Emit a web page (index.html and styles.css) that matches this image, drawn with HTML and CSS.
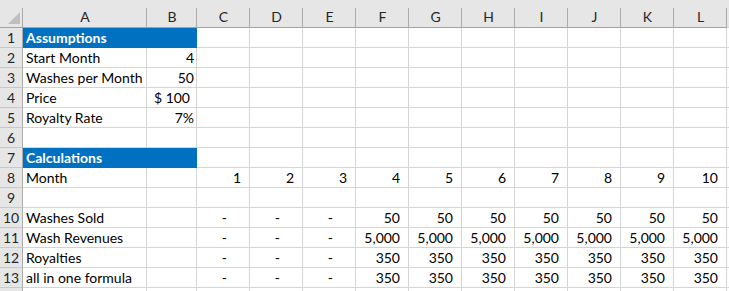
FILE: index.html
```html
<!DOCTYPE html>
<html>
<head>
<meta charset="utf-8">
<link rel="stylesheet" href="styles.css">
</head>
<body>
<div class="sheet">
  <div class="ch corner"><span class="tri"></span></div>
  <div class="ch">A</div><div class="ch">B</div><div class="ch">C</div><div class="ch">D</div><div class="ch">E</div><div class="ch">F</div><div class="ch">G</div><div class="ch">H</div><div class="ch">I</div><div class="ch">J</div><div class="ch">K</div><div class="ch">L</div><div class="ch x"></div>

  <div class="rh">1</div><div class="c title">Assumptions</div>
  <div class="c"></div><div class="c"></div><div class="c"></div><div class="c"></div><div class="c"></div><div class="c"></div><div class="c"></div><div class="c"></div><div class="c"></div><div class="c"></div><div class="x"></div>

  <div class="rh">2</div><div class="c">Start Month</div><div class="c num">4</div>
  <div class="c"></div><div class="c"></div><div class="c"></div><div class="c"></div><div class="c"></div><div class="c"></div><div class="c"></div><div class="c"></div><div class="c"></div><div class="c"></div><div class="x"></div>

  <div class="rh">3</div><div class="c">Washes per Month</div><div class="c num">50</div>
  <div class="c"></div><div class="c"></div><div class="c"></div><div class="c"></div><div class="c"></div><div class="c"></div><div class="c"></div><div class="c"></div><div class="c"></div><div class="c"></div><div class="x"></div>

  <div class="rh">4</div><div class="c">Price</div><div class="c acct"><span>$</span><span>100</span></div>
  <div class="c"></div><div class="c"></div><div class="c"></div><div class="c"></div><div class="c"></div><div class="c"></div><div class="c"></div><div class="c"></div><div class="c"></div><div class="c"></div><div class="x"></div>

  <div class="rh">5</div><div class="c">Royalty Rate</div><div class="c num">7%</div>
  <div class="c"></div><div class="c"></div><div class="c"></div><div class="c"></div><div class="c"></div><div class="c"></div><div class="c"></div><div class="c"></div><div class="c"></div><div class="c"></div><div class="x"></div>

  <div class="rh">6</div><div class="c"></div><div class="c"></div>
  <div class="c"></div><div class="c"></div><div class="c"></div><div class="c"></div><div class="c"></div><div class="c"></div><div class="c"></div><div class="c"></div><div class="c"></div><div class="c"></div><div class="x"></div>

  <div class="rh">7</div><div class="c title">Calculations</div>
  <div class="c"></div><div class="c"></div><div class="c"></div><div class="c"></div><div class="c"></div><div class="c"></div><div class="c"></div><div class="c"></div><div class="c"></div><div class="c"></div><div class="x"></div>

  <div class="rh">8</div><div class="c">Month</div><div class="c"></div>
  <div class="c num m">1</div><div class="c num m">2</div><div class="c num m">3</div><div class="c num m">4</div><div class="c num m">5</div><div class="c num m">6</div><div class="c num m">7</div><div class="c num m">8</div><div class="c num m">9</div><div class="c num m">10</div><div class="x"></div>

  <div class="rh">9</div><div class="c"></div><div class="c"></div>
  <div class="c"></div><div class="c"></div><div class="c"></div><div class="c"></div><div class="c"></div><div class="c"></div><div class="c"></div><div class="c"></div><div class="c"></div><div class="c"></div><div class="x"></div>

  <div class="rh">10</div><div class="c">Washes Sold</div><div class="c"></div>
  <div class="c num dash">-</div><div class="c num dash">-</div><div class="c num dash">-</div><div class="c num m">50</div><div class="c num m">50</div><div class="c num m">50</div><div class="c num m">50</div><div class="c num m">50</div><div class="c num m">50</div><div class="c num m">50</div><div class="x"></div>

  <div class="rh">11</div><div class="c">Wash Revenues</div><div class="c"></div>
  <div class="c num dash">-</div><div class="c num dash">-</div><div class="c num dash">-</div><div class="c num m">5,000</div><div class="c num m">5,000</div><div class="c num m">5,000</div><div class="c num m">5,000</div><div class="c num m">5,000</div><div class="c num m">5,000</div><div class="c num m">5,000</div><div class="x"></div>

  <div class="rh">12</div><div class="c">Royalties</div><div class="c"></div>
  <div class="c num dash">-</div><div class="c num dash">-</div><div class="c num dash">-</div><div class="c num m">350</div><div class="c num m">350</div><div class="c num m">350</div><div class="c num m">350</div><div class="c num m">350</div><div class="c num m">350</div><div class="c num m">350</div><div class="x"></div>

  <div class="rh">13</div><div class="c">all in one formula</div><div class="c"></div>
  <div class="c num dash">-</div><div class="c num dash">-</div><div class="c num dash">-</div><div class="c num m">350</div><div class="c num m">350</div><div class="c num m">350</div><div class="c num m">350</div><div class="c num m">350</div><div class="c num m">350</div><div class="c num m">350</div><div class="x"></div>

  <div class="rh"></div><div class="c"></div><div class="c"></div>
  <div class="c"></div><div class="c"></div><div class="c"></div><div class="c"></div><div class="c"></div><div class="c"></div><div class="c"></div><div class="c"></div><div class="c"></div><div class="c"></div><div class="x"></div>
</div>
</body>
</html>
```

FILE: styles.css
```css
* { box-sizing: border-box; }
html, body { margin: 0; padding: 0; background: #fff; overflow: hidden; }
body { width: 729px; height: 291px; }

.sheet {
  display: grid;
  grid-template-columns: 23px 124px 50px repeat(10, 53px) 1fr;
  grid-template-rows: 28px;
  grid-auto-rows: 20px;
  height: 291px;
  overflow: hidden;
  font-family: Lato, "Liberation Sans", sans-serif;
  font-size: 14px;
  color: #000;
}

.ch {
  background: linear-gradient(#ababab, #ababab) right 0 bottom 0 / 1px 19px no-repeat, #e6e6e6;
  border-bottom: 1px solid #a3a3a3;
  color: #262626;
  display: flex;
  align-items: flex-end;
  justify-content: center;
  padding-bottom: 2px;
  line-height: 16px;
}
.ch.x { background: #e6e6e6; }
.corner {
  padding: 0;
  display: flex;
  align-items: flex-end;
  justify-content: flex-end;
}
.tri {
  width: 12px;
  height: 12px;
  margin: 0 3px 3px 0;
  background: #bfbfbf;
  clip-path: polygon(100% 0, 100% 100%, 0 100%);
}

.rh {
  background: #e6e6e6;
  border-right: 1px solid #ababab;
  border-bottom: 1px solid #c8c8c8;
  color: #262626;
  display: flex;
  align-items: flex-end;
  justify-content: center;
  padding-bottom: 1px;
  line-height: 16px;
}

.c {
  border-right: 1px solid #d4d4d4;
  border-bottom: 1px solid #d4d4d4;
  display: flex;
  align-items: flex-end;
  padding: 0 2px 1px 3px;
  line-height: 16px;
  white-space: nowrap;
}
.x { border-bottom: 1px solid #d4d4d4; }

.title {
  grid-column: span 2;
  background: #0070c0;
  border-bottom-color: #0070c0;
  border-right-color: #0070c0;
  color: #fff;
  font-weight: bold;
}

.num { justify-content: flex-end; }
.num.m { padding-right: 8px; }
.num.dash { padding-right: 22px; }
.acct { justify-content: space-between; padding-left: 7px; padding-right: 6px; }
```
